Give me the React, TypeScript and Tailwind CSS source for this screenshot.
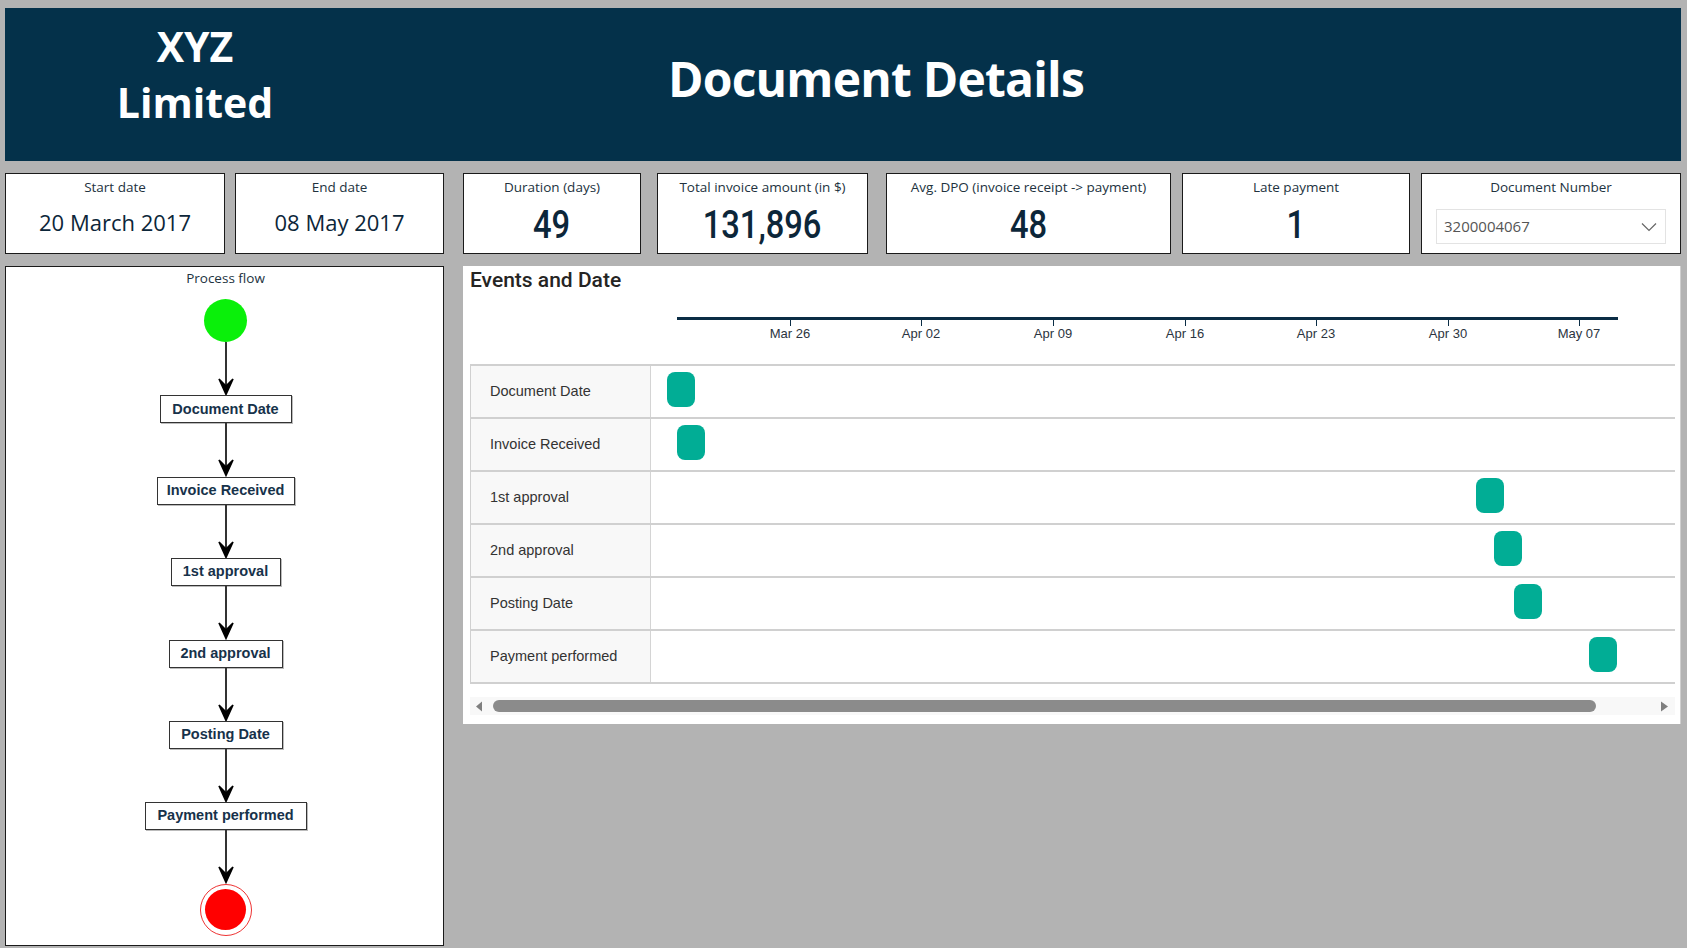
import React from "react";

const cards: { title: string; value: string; w: string; ml: string; big?: boolean }[] = [
  { title: "Start date", value: "20 March 2017", w: "w-[220px]", ml: "ml-0" },
  { title: "End date", value: "08 May 2017", w: "w-[209px]", ml: "ml-[10px]" },
  { title: "Duration (days)", value: "49", w: "w-[178px]", ml: "ml-[19px]", big: true },
  { title: "Total invoice amount (in $)", value: "131,896", w: "w-[211px]", ml: "ml-[16px]", big: true },
  { title: "Avg. DPO (invoice receipt -> payment)", value: "48", w: "w-[285px]", ml: "ml-[18px]", big: true },
  { title: "Late payment", value: "1", w: "w-[228px]", ml: "ml-[11px]", big: true },
];

const flowSteps: { label: string; w: string }[] = [
  { label: "Document Date", w: "w-[132px]" },
  { label: "Invoice Received", w: "w-[138px]" },
  { label: "1st approval", w: "w-[110px]" },
  { label: "2nd approval", w: "w-[114px]" },
  { label: "Posting Date", w: "w-[114px]" },
  { label: "Payment performed", w: "w-[162px]" },
];

const ticks: { label: string; x: number }[] = [
  { label: "Mar 26", x: 327 },
  { label: "Apr 02", x: 458 },
  { label: "Apr 09", x: 590 },
  { label: "Apr 16", x: 722 },
  { label: "Apr 23", x: 853 },
  { label: "Apr 30", x: 985 },
  { label: "May 07", x: 1116 },
];

const events: { label: string; x: number }[] = [
  { label: "Document Date", x: 16 },
  { label: "Invoice Received", x: 26 },
  { label: "1st approval", x: 825 },
  { label: "2nd approval", x: 843 },
  { label: "Posting Date", x: 863 },
  { label: "Payment performed", x: 938 },
];

function Connector() {
  return (
    <svg className="block w-[20px] h-[53.4px]" viewBox="0 0 20 53.4" preserveAspectRatio="none">
      <line x1="10" y1="0" x2="10" y2="50" stroke="#333" strokeWidth="2" />
      <path d="M3 37 L10 52.4 L17 37 L10 44 Z" fill="#000" stroke="#000" strokeWidth="1.6" strokeLinejoin="miter" />
    </svg>
  );
}

export default function App() {
  return (
    <div className="w-[1687px] h-[948px] bg-[#b3b3b3] overflow-hidden pt-[8px] pl-[5px] pr-[6px] font-['Open_Sans',sans-serif]">
      {/* Header */}
      <div className="h-[153px] bg-[#04314a] flex items-start text-white">
        <div className="w-[380px] pt-[10px] text-center text-[41px] font-bold leading-[56px]">
          XYZ
          <br />
          Limited
        </div>
        <div className="w-[982px] h-full flex items-center justify-center pb-[11px] text-[48px] font-bold tracking-[-0.8px]">
          Document Details
        </div>
      </div>

      {/* KPI row */}
      <div className="mt-[12px] h-[81px] flex">
        {cards.map((c) => (
          <div
            key={c.title}
            className={`${c.w} ${c.ml} h-full bg-white border border-[#1a1a1a] flex flex-col items-center pt-[3px]`}
          >
            <div className="text-[13.5px] leading-[20px] text-[#22323e]">{c.title}</div>
            {c.big ? (
              <div className="mt-[6px] text-[38px] leading-[44px] font-medium font-['Roboto',sans-serif] text-[#0c2639] scale-x-[0.86]">
                {c.value}
              </div>
            ) : (
              <div className="mt-[10px] text-[22px] leading-[30px] text-[#0c2639]">{c.value}</div>
            )}
          </div>
        ))}
        <div className="w-[260px] ml-[11px] h-full bg-white border border-[#1a1a1a] flex flex-col pt-[3px]">
          <div className="text-[13.5px] leading-[20px] text-[#22323e] text-center">Document Number</div>
          <div className="mt-[12px] ml-[14px] w-[230px] h-[35px] border border-[#e3e3e3] flex items-center pl-[7px] pr-[8px]">
            <span className="text-[15px] text-[#555]">3200004067</span>
            <svg className="ml-auto w-[16px] h-[10px]" viewBox="0 0 16 10">
              <path d="M1 1.5 L8 8.5 L15 1.5" fill="none" stroke="#666" strokeWidth="1.2" />
            </svg>
          </div>
        </div>
      </div>

      {/* Bottom */}
      <div className="mt-[12px] flex items-start">
        {/* Process flow */}
        <div className="w-[439px] h-[680px] bg-white border border-[#1a1a1a] flex flex-col items-center pl-[2px]">
          <div className="h-[22px] leading-[22px] text-[13.5px] text-[#22323e]">Process flow</div>
          <div className="mt-[10px] w-[43px] h-[43px] rounded-full bg-[#0af00a]" />
          <Connector />
          {flowSteps.map((s) => (
            <React.Fragment key={s.label}>
              <div
                className={`${s.w} h-[28px] border-[1.5px] border-[#333] bg-white flex items-center justify-center font-['Liberation_Sans',Arial,sans-serif] font-bold text-[14.5px] text-[#17324a] shadow-[1px_1px_0_#bbb]`}
              >
                {s.label}
              </div>
              <Connector />
            </React.Fragment>
          ))}
          <div className="w-[52px] h-[52px] rounded-full border-[1.5px] border-[#ee3333] bg-white flex items-center justify-center">
            <div className="w-[41px] h-[41px] rounded-full bg-[#ff0000]" />
          </div>
        </div>

        {/* Events and Date */}
        <div className="ml-[19px] w-[1218px] h-[458px] bg-white border-r border-[#cfcfcf] flex flex-col">
          <div className="pl-[7px] h-[28px] leading-[28px] text-[21px] font-medium text-[#252423] font-['Roboto',sans-serif]">
            Events and Date
          </div>
          <div className="relative h-[70px] font-['Liberation_Sans',Arial,sans-serif]">
            <div className="absolute left-[214px] top-[23px] w-[941px] h-[3px] bg-[#0b2d45]" />
            {ticks.map((t) => (
              <React.Fragment key={t.label}>
                <div className="absolute top-[26px] w-px h-[6px] bg-[#0b2d45]" style={{ left: t.x }} />
                <div
                  className="absolute top-[32px] -translate-x-1/2 text-[13px] leading-[16px] text-[#2b3440] whitespace-nowrap"
                  style={{ left: t.x }}
                >
                  {t.label}
                </div>
              </React.Fragment>
            ))}
          </div>
          <div className="ml-[7px] mr-[5px] border-t-2 border-l border-[#d0d0d0] font-['Liberation_Sans',Arial,sans-serif]">
            {events.map((e) => (
              <div key={e.label} className="h-[53px] flex border-b-2 border-[#d0d0d0]">
                <div className="w-[180px] bg-[#f8f8f8] border-r border-[#d4d4d4] flex items-center pl-[19px] text-[14.5px] text-[#333]">
                  {e.label}
                </div>
                <div className="relative flex-1">
                  <div
                    className="absolute top-[6px] w-[28px] h-[35px] rounded-[8px] bg-[#01ad95]"
                    style={{ left: e.x }}
                  />
                </div>
              </div>
            ))}
          </div>
          <div className="mt-[13px] ml-[7px] mr-[5px] h-[18px] bg-[#f8f8f8] flex items-center pl-[5px] pr-[6px]">
            <svg className="w-[8px] h-[11px]" viewBox="0 0 8 11">
              <path d="M7 0.5 L1 5.5 L7 10.5 Z" fill="#7f7f7f" />
            </svg>
            <div className="ml-[10px] w-[1103px] h-[12px] rounded-full bg-[#8b8b8b]" />
            <svg className="ml-auto w-[9px] h-[11px]" viewBox="0 0 9 11">
              <path d="M1 0.5 L8 5.5 L1 10.5 Z" fill="#7f7f7f" />
            </svg>
          </div>
        </div>
      </div>
    </div>
  );
}
